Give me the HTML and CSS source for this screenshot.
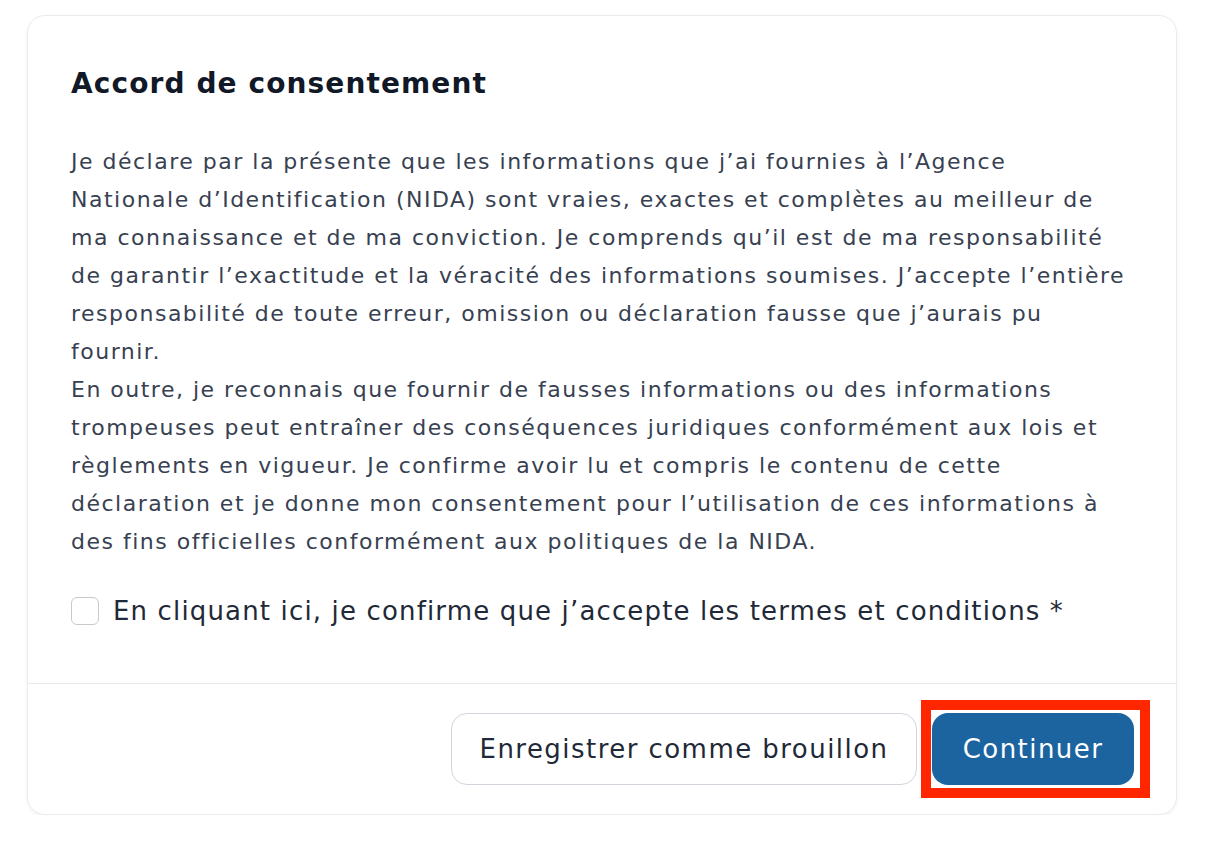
FILE: index.html
```html
<!DOCTYPE html>
<html lang="fr">
<head>
<meta charset="utf-8">
<title>Accord de consentement</title>
<link rel="stylesheet" href="styles.css">
</head>
<body>
<div class="card">
  <div class="card-body">
    <h2 class="title">Accord de consentement</h2>
    <div class="text">
      <p>Je déclare par la présente que les informations que j’ai fournies à l’Agence<br>Nationale d’Identification (NIDA) sont vraies, exactes et complètes au meilleur de<br>ma connaissance et de ma conviction. Je comprends qu’il est de ma responsabilité<br>de garantir l’exactitude et la véracité des informations soumises. J’accepte l’entière<br>responsabilité de toute erreur, omission ou déclaration fausse que j’aurais pu<br>fournir.</p>
      <p>En outre, je reconnais que fournir de fausses informations ou des informations<br>trompeuses peut entraîner des conséquences juridiques conformément aux lois et<br>règlements en vigueur. Je confirme avoir lu et compris le contenu de cette<br>déclaration et je donne mon consentement pour l’utilisation de ces informations à<br>des fins officielles conformément aux politiques de la NIDA.</p>
    </div>
    <label class="check-row">
      <input type="checkbox" class="check">
      <span class="check-label">En cliquant ici, je confirme que j’accepte les termes et conditions *</span>
    </label>
  </div>
  <div class="card-footer">
    <button class="btn btn-outline">Enregistrer comme brouillon</button>
    <button class="btn btn-primary">Continuer<span class="highlight"></span></button>
  </div>
</div>
</body>
</html>
```
FILE: styles.css
```css
* { box-sizing: border-box; }
html, body { margin: 0; padding: 0; background: #ffffff; }
body {
  font-family: "DejaVu Sans", "Open Sans", sans-serif;
  padding: 15px 0 0 27px;
}
.card {
  width: 1150px;
  height: 800px;
  border: 1px solid #ebebeb;
  border-radius: 18px;
  box-shadow: 0 2px 4px rgba(0, 0, 0, 0.05);
  background: #fff;
  display: flex;
  flex-direction: column;
}
.card-body {
  flex: 1;
  padding: 50px 43px 0 43px;
}
.title {
  margin: 0;
  font-size: 28px;
  line-height: 36px;
  font-weight: 700;
  color: #111827;
  letter-spacing: 1.1px;
}
.text {
  margin-top: 41px;
  font-size: 22px;
  line-height: 38px;
  color: #374151;
  white-space: nowrap;
  letter-spacing: 1.5px;
}
.text p { margin: 0; }
.check-row {
  margin-top: 32px;
  display: flex;
  align-items: center;
  gap: 14px;
  height: 36px;
}
.check {
  appearance: none;
  -webkit-appearance: none;
  margin: 0;
  width: 28px;
  height: 28px;
  border: 1px solid #c9c9c9;
  border-radius: 6px;
  background: #fff;
}
.check-label {
  font-size: 26px;
  color: #1f2937;
  white-space: nowrap;
  letter-spacing: 1.15px;
}
.card-footer {
  height: 131px;
  border-top: 1px solid #e8e8eb;
  display: flex;
  justify-content: flex-end;
  align-items: center;
  gap: 15px;
  padding-right: 42px;
}
.btn {
  font-family: inherit;
  height: 72px;
  border-radius: 16px;
  font-size: 26px;
  letter-spacing: 1.45px;
  cursor: pointer;
}
.btn-outline {
  width: 466px;
  background: #fff;
  border: 1px solid #d1d5db;
  color: #1f2937;
}
.btn-primary {
  position: relative;
  width: 202px;
  background: #1c64a0;
  border: none;
  color: #fff;
}
.highlight {
  position: absolute;
  left: -11px;
  top: -13px;
  width: 229px;
  height: 98px;
  border: 10px solid #ff2600;
  pointer-events: none;
}
```
